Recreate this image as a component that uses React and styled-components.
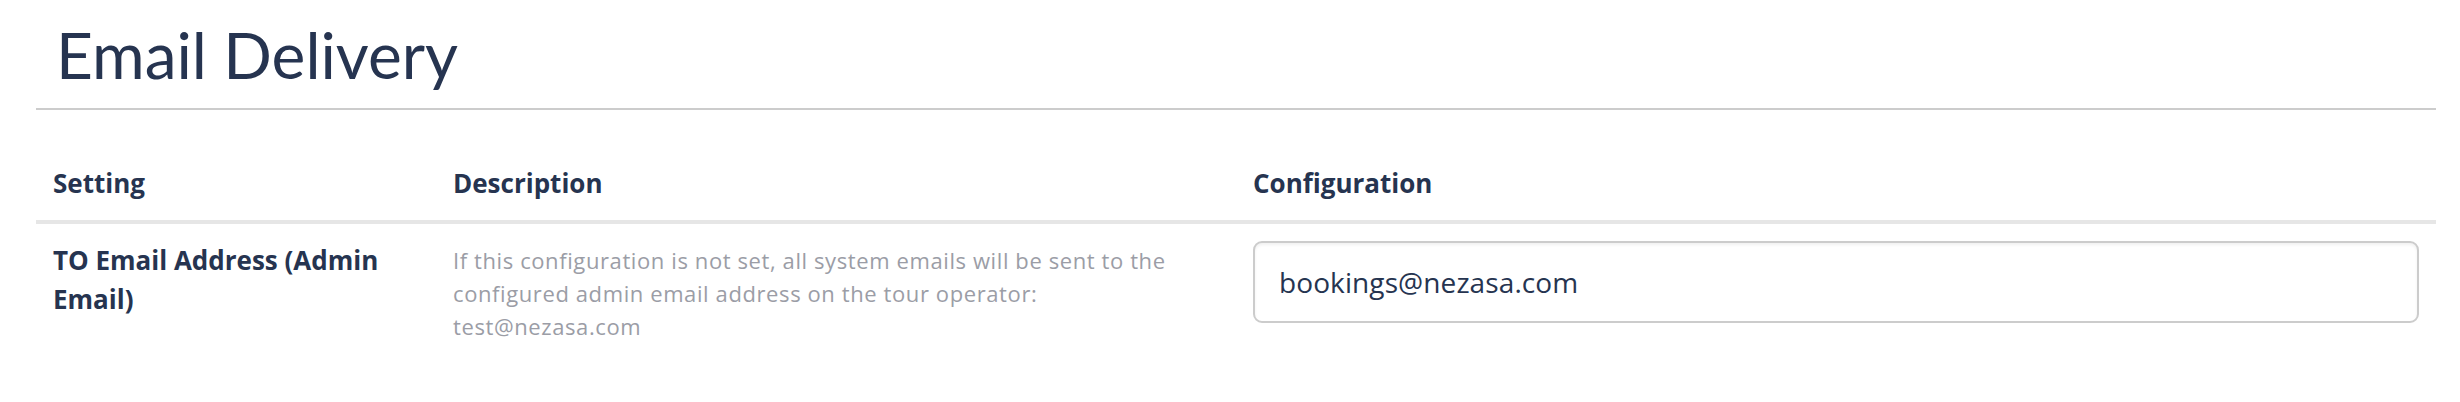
import styled, { createGlobalStyle } from "styled-components";

const GlobalStyle = createGlobalStyle`
    body {
        margin: 0;
        background: #fff;
        font-family: "Open Sans", "Noto Sans", sans-serif;
        color: #263450;
    }
`

const Page = styled.div`
    padding: 0 24px 0 36px;
`

const Header = styled.header`
    padding: 16px 0 15px 20px;
    border-bottom: 2px solid #cccccc;
`

const Title = styled.h1`
    margin: 0;
    font-family: "Lato", sans-serif;
    font-size: 64px;
    line-height: 77px;
    font-weight: 400;
    color: #263450;
`

const Table = styled.table`
    width: 100%;
    margin-top: 37px;
    border-collapse: collapse;
    table-layout: fixed;
`

const TH = styled.th`
    box-sizing: border-box;
    width: ${(p) => p.$width};
    padding: 17px;
    text-align: left;
    font-size: 26px;
    line-height: 39px;
    font-weight: 700;
    color: #263450;
    border-bottom: 4px solid #e6e6e6;
`

const TD = styled.td`
    padding: 17px;
    vertical-align: top;
`

const SettingName = styled.div`
    font-size: 26px;
    line-height: 39px;
    font-weight: 700;
    color: #263450;
`

const Description = styled.div`
    padding-top: 3px;
    font-size: 22px;
    line-height: 33px;
    letter-spacing: 0.6px;
    color: #9b9da6;
`

const Input = styled.input`
    box-sizing: border-box;
    width: 100%;
    height: 82px;
    padding: 0 24px;
    border: 2px solid #cccccc;
    border-radius: 9px;
    box-shadow: inset 0 2px 3px rgba(0, 0, 0, 0.06);
    font-family: inherit;
    font-size: 28px;
    letter-spacing: 0.1px;
    color: #263450;
    background: #fff;
    outline: none;
`

const columns = [
    { label: "Setting", width: "16.667%" },
    { label: "Description", width: "33.333%" },
    { label: "Configuration", width: "50%" },
]

const App = () => {
    return (
        <>
            <GlobalStyle />
            <Page>
                <Header>
                    <Title>Email Delivery</Title>
                </Header>
                <Table>
                    <thead>
                        <tr>
                            {columns.map((col) => (
                                <TH key={col.label} $width={col.width}>{col.label}</TH>
                            ))}
                        </tr>
                    </thead>
                    <tbody>
                        <tr>
                            <TD>
                                <SettingName>TO Email Address (Admin Email)</SettingName>
                            </TD>
                            <TD>
                                <Description>
                                    If this configuration is not set, all system emails will be sent to the
                                    configured admin email address on the tour operator: test@nezasa.com
                                </Description>
                            </TD>
                            <TD>
                                <Input defaultValue="bookings@nezasa.com" />
                            </TD>
                        </tr>
                    </tbody>
                </Table>
            </Page>
        </>
    );
}

export default App;
